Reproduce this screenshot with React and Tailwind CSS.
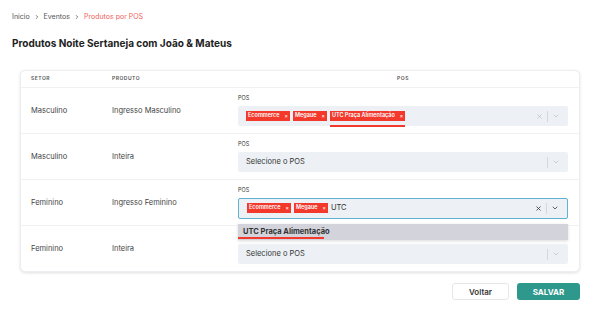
import { ChevronRight, ChevronDown, X } from "lucide-react";

const Tag = ({ label }) => (
  <span className="flex h-[10px] items-center gap-[5px] bg-[#f3382c] px-[2px] text-[5.5px] font-semibold leading-none text-white">
    {label}
    <span className="text-[5px] font-bold text-[#ffe2df]">×</span>
  </span>
);

const Indicators = ({ dark }) => (
  <div className="flex items-center">
    {dark !== undefined && (
      <X className={dark ? "h-[7px] w-[7px] text-[#444]" : "h-[7px] w-[7px] text-[#c4c8ce]"} strokeWidth={3} />
    )}
    <span className="mx-[4px] h-[11px] w-px bg-[#d4d8dd]" />
    <ChevronDown className={dark ? "mr-[8px] h-[8px] w-[8px] text-[#444]" : "mr-[8px] h-[8px] w-[8px] text-[#c4c8ce]"} strokeWidth={2.5} />
  </div>
);

function PosSelect({ tags, placeholder, typed, focused, underline, clearable }) {
  return (
    <div>
      <p className="mb-[4px] text-[5.5px] leading-[7px] text-[#333]">POS</p>
      <div
        className={
          focused
            ? "flex h-[21px] items-center justify-between rounded-[2px] border border-[#5fb2d3] bg-[#edf1f5] pl-[8px]"
            : "flex h-[20px] items-center justify-between rounded-[2px] bg-[#edf1f5] pl-[8px]"
        }
      >
        <div className="flex items-center gap-[3px]">
          {tags &&
            tags.map((t, i) => (
              <div key={t} className="relative">
                <Tag label={t} />
                {underline && i === tags.length - 1 && (
                  <span className="absolute left-0 right-0 top-[14px] h-[1.5px] bg-[#f3382c]" />
                )}
              </div>
            ))}
          {typed && <span className="text-[7.5px] text-[#333]">{typed}</span>}
          {placeholder && <span className="text-[7.5px] text-[#333]">{placeholder}</span>}
        </div>
        <Indicators dark={clearable} />
      </div>
    </div>
  );
}

const rows = [
  { setor: "Masculino", produto: "Ingresso Masculino", sel: { tags: ["Ecommerce", "Megaue", "UTC Praça Alimentação"], underline: true, clearable: false } },
  { setor: "Masculino", produto: "Inteira", sel: { placeholder: "Selecione o POS" } },
  { setor: "Feminino", produto: "Ingresso Feminino", sel: { tags: ["Ecommerce", "Megaue"], typed: "UTC", focused: true, clearable: true }, menu: true },
  { setor: "Feminino", produto: "Inteira", sel: { placeholder: "Selecione o POS" } },
];

export default function App() {
  return (
    <div className="h-[311px] w-[600px] bg-white font-['Inter',sans-serif] text-[#333]">
      <div className="px-[12px] pt-[12px]">
        <nav className="flex items-center gap-[4px] text-[7px] leading-[9px] text-[#555]">
          <span>Inicio</span>
          <ChevronRight className="h-[6px] w-[6px]" strokeWidth={3} />
          <span>Eventos</span>
          <ChevronRight className="h-[6px] w-[6px]" strokeWidth={3} />
          <span className="text-[#f0625a]">Produtos por POS</span>
        </nav>
        <h1 className="mt-[15px] text-[10px] font-bold leading-[14px] text-[#222]">
          Produtos Noite Sertaneja com João &amp; Mateus
        </h1>
      </div>

      <div className="mx-[20px] mt-[20px] rounded-[5px] border border-[#eceef1] bg-white shadow-[0_1px_3px_rgba(0,0,0,0.12)]">
        <div className="grid h-[17px] grid-cols-[81px_126px_1fr] items-center border-b border-[#f0f1f3] pl-[10px] pr-[11px] text-[5px] font-semibold tracking-[0.5px] text-[#555]">
          <span>SETOR</span>
          <span>PRODUTO</span>
          <span className="text-center">POS</span>
        </div>
        {rows.map((r, i) => (
          <div
            key={i}
            className={
              i < rows.length - 1
                ? "relative grid h-[46px] grid-cols-[81px_126px_1fr] items-center border-b border-[#f0f1f3] pl-[10px] pr-[11px]"
                : "relative grid h-[45px] grid-cols-[81px_126px_1fr] items-center pl-[10px] pr-[11px]"
            }
          >
            <span className="text-[7.5px] text-[#444]">{r.setor}</span>
            <span className="text-[7.5px] text-[#444]">{r.produto}</span>
            <div className="relative">
              <PosSelect {...r.sel} />
              {r.menu && (
                <div className="absolute left-0 right-0 top-[37px] z-10 bg-white shadow-[0_1px_3px_rgba(0,0,0,0.15)]">
                  <div className="relative flex h-[16px] items-center bg-[#d2d3db] pl-[5px] text-[7.5px] font-bold text-[#333]">
                    UTC Praça Alimentação
                    <span className="absolute bottom-[1px] left-0 h-[1.5px] w-[86px] bg-[#f3382c]" />
                  </div>
                </div>
              )}
            </div>
          </div>
        ))}
      </div>

      <div className="mr-[20px] mt-[11px] flex justify-end gap-[8px]">
        <button className="h-[17px] w-[57px] rounded-[3px] border border-[#e5e7eb] bg-white text-[8px] font-semibold text-[#333]">
          Voltar
        </button>
        <button className="h-[17px] w-[63px] rounded-[3px] bg-[#2f988d] text-[8px] font-bold text-white">
          SALVAR
        </button>
      </div>
    </div>
  );
}
